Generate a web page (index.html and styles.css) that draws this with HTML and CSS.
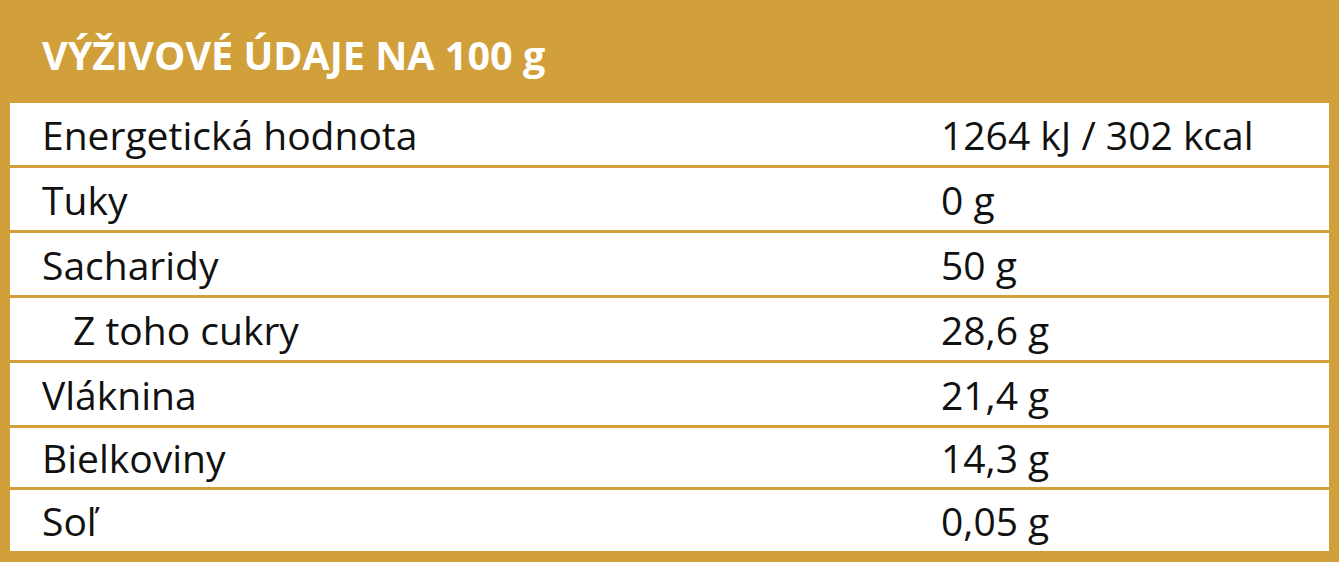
FILE: index.html
```html
<!DOCTYPE html>
<html lang="sk">
<head>
<meta charset="utf-8">
<title>Výživové údaje</title>
<link rel="stylesheet" href="styles.css">
</head>
<body>
<div class="panel">
  <div class="header">VÝŽIVOVÉ ÚDAJE NA 100 g</div>
  <div class="table">
    <div class="row"><div class="label">Energetická hodnota</div><div class="value">1264 kJ / 302 kcal</div></div>
    <div class="row"><div class="label">Tuky</div><div class="value">0 g</div></div>
    <div class="row"><div class="label">Sacharidy</div><div class="value">50 g</div></div>
    <div class="row"><div class="label sub">Z toho cukry</div><div class="value">28,6 g</div></div>
    <div class="row"><div class="label">Vláknina</div><div class="value">21,4 g</div></div>
    <div class="row short"><div class="label">Bielkoviny</div><div class="value">14,3 g</div></div>
    <div class="row last"><div class="label">Soľ</div><div class="value">0,05 g</div></div>
  </div>
</div>
</body>
</html>
```
FILE: styles.css
```css
html, body {
  margin: 0;
  padding: 0;
}
body {
  background: #d1a03a;
  font-family: "Open Sans", "DejaVu Sans", sans-serif;
  width: 1339px;
  height: 562px;
  overflow: hidden;
}
.panel {
  padding: 0 10px 11px 10px;
}
.header {
  height: 103px;
  box-sizing: border-box;
  padding-left: 32px;
  display: flex;
  align-items: center;
  color: #fff;
  font-weight: 700;
  font-size: 39.5px;
  padding-top: 6px;
}
.table {
  display: flex;
  flex-direction: column;
  gap: 3px;
}
.row {
  background: #fff;
  height: 62px;
  display: grid;
  grid-template-columns: 931px 1fr;
  align-items: center;
  color: #111;
  font-size: 39px;
  line-height: 1;
}
.row.short {
  height: 59px;
}
.row.last {
  height: 61px;
}
.label {
  padding-left: 32px;
}
.label.sub {
  padding-left: 63px;
}
```
